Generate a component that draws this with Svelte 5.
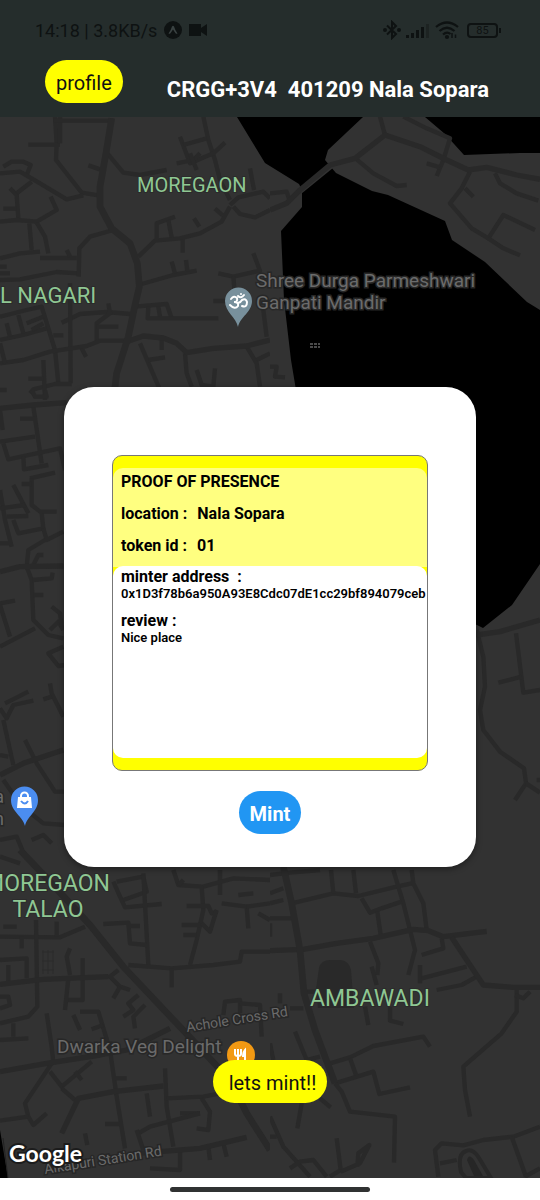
<script>
  const tiles = [
    {
      x: 0, y: 110, w: 270, h: 290,
      thick: [
        'M335 25 L318 130 L300 230 L300 290 L335 355 L390 400 L412 460 L418 530 L404 590 L385 680 L350 790 L340 870'
      ],
      roads: [
        'M165 20 L170 100 L168 150 L245 248 L295 256', 'M85 104 H180', 'M180 20 V100', 'M160 32 H340',
        'M322 130 L370 188 L420 195 L500 180', 'M265 166 L300 178', 'M10 170 L35 155 H70 L92 165 L80 195',
        'M0 190 L60 185 L120 220 L200 268 L250 256', 'M30 235 L50 255 L55 325', 'M50 250 L95 215', 'M10 296 H50',
        'M0 335 L50 330 L110 335 L170 300 L152 260', 'M88 340 L95 420', 'M110 338 L135 380 L145 430',
        'M0 445 L60 430 L120 425', 'M120 444 H230', 'M200 420 L210 440', 'M0 470 H20', 'M0 490 H30', 'M0 510 L60 508 L170 486 L235 490',
        'M340 360 L270 380 L238 415 L236 500', 'M415 440 L465 392 L540 385 L600 370 L665 335 L690 290',
        'M470 390 V340 L525 320', 'M505 330 L515 382', 'M548 388 V428', 'M582 325 L598 350', 'M645 296 L668 316',
        'M610 20 L625 90 L645 150 L660 210 L690 270', 'M540 80 L570 160 L640 130 L675 98', 'M550 105 L620 85', 'M530 160 L580 150 L600 130', 'M570 130 L590 180',
        'M750 175 L762 240', 'M690 285 L715 262 L790 245 L810 265', 'M700 290 L720 312 L765 322 L810 300',
        'M425 522 L520 495 L590 482', 'M515 455 L525 490', 'M558 450 L562 484', 'M655 490 L700 500 L780 482 L760 430',
        'M640 573 H680', 'M700 500 L705 560', 'M404 590 L500 582 L515 625', 'M445 590 L443 625 H655', 'M475 590 L480 620', 'M390 612 L320 606 L240 612 L185 638',
        'M0 620 L80 600 L125 590 L165 720 L175 820', 'M0 690 L70 675 L140 655', 'M20 640 L30 680', 'M55 615 L70 670', 'M80 640 L130 620', 'M95 660 L130 640',
        'M210 520 L212 820', 'M325 580 L330 610 L290 640 L290 695', 'M290 650 H355', 'M0 760 L70 750 L150 725 L260 708 L300 692 L380 692',
        'M0 700 L15 760', 'M160 676 H190', 'M245 715 L258 740', 'M90 850 L100 838 L165 822 L215 822', 'M130 750 L135 870', 'M85 806 H130',
        'M420 700 L450 770 L480 840', 'M445 750 L495 742', 'M485 690 V720', 'M555 730 L560 790 L575 830', 'M590 780 L605 825 L640 830 L645 775', 'M740 710 L770 760 L780 830', 'M790 600 L800 680', 'M770 750 L810 730', 'M0 840 H20'
      ],
      medium: ['M380 695 L430 678 L490 684 L530 700 L560 728 L640 715 L740 708 L810 690']
    },
    {
      x: 270, y: 110, w: 270, h: 290,
      thick: [],
      medium: ['M0 300 L50 280 L90 240 L180 165 L255 145 L345 75 L450 110 L530 150 L595 180 L650 172 L740 195 L810 208'],
      roads: [
        'M330 20 L345 75', 'M260 148 L310 190 L380 228 L410 225', 'M400 20 L470 55 L540 85 L520 150 L500 198', 'M470 160 L510 172',
        'M600 185 L575 235 L540 280 L605 355 L655 385 L700 315 L795 360', 'M655 385 L700 415 L750 436', 'M585 235 L610 260', 'M675 190 L690 220 L740 250 L805 272',
        'M0 250 L50 245 L60 275', 'M0 770 H20 L15 800 L45 802'
      ]
    },
    {
      x: 0, y: 390, w: 120, h: 480,
      thick: [],
      medium: ['M0 55 L100 45 L200 38', 'M0 545 L60 530 L190 528', 'M0 1155 L70 1120 L190 1080'],
      roads: [
        'M95 0 L105 20 H140 L135 0', 'M0 60 L8 120', 'M100 50 L125 220', 'M60 86 H105', 'M0 155 L105 140', 'M10 160 L25 208 L180 175 L195 240', 'M70 200 L72 238 L145 225',
        'M90 265 L165 248', 'M95 265 V345 L120 365 L170 365', 'M65 282 H95', 'M40 285 L85 370', 'M0 300 L15 390 L35 470', 'M0 355 L75 345', 'M20 380 L85 378',
        'M40 390 L55 430 L130 415 L125 370', 'M130 415 L140 450 L190 425', 'M0 460 H30', 'M135 450 L85 480 L80 530 L95 570 L100 690 L145 735 L190 745',
        'M100 525 L115 495 L130 495', 'M98 570 L155 565 L158 548', 'M100 615 H130', 'M0 640 L45 632', 'M0 645 L30 740', 'M0 770 L105 715', 'M150 720 L175 695 L190 720', 'M155 650 L180 670 L185 710',
        'M190 770 L145 790 L175 828 L195 825', 'M150 880 L155 910 L190 980', 'M130 928 L155 920', 'M15 940 L85 905', 'M0 955 L20 985 L40 945 L100 932', 'M10 990 L40 1125', 'M75 1050 L110 1120 L165 1205 L195 1205', 'M0 1095 L25 1100',
        'M10 1170 L45 1220', 'M80 1260 L130 1300 L195 1305', 'M0 1350 L50 1340 L75 1400', 'M95 1350 L130 1335 L155 1360', 'M0 1400 L60 1420'
      ]
    },
    {
      x: 0, y: 850, w: 270, h: 350,
      thick: ['M60 0 L150 95 L270 225 L370 350 L530 520 L690 690 L740 790 L810 900'],
      medium: ['M0 403 L130 388 L325 380', 'M0 665 L140 640 L300 615 L380 600 L510 535', 'M185 850 L235 745 L340 725 L490 708', 'M415 910 L600 895 L740 862'],
      roads: [
        'M0 260 L180 262 L255 230', 'M108 210 L112 470 L85 500 L0 520', 'M65 260 V295', 'M170 215 V260', 'M10 230 H50', 'M0 330 L80 325 V385', 'M25 345 V395', 'M0 440 H25 L30 465 L0 475', 'M40 520 V560', 'M0 570 L85 565',
        'M210 295 L200 320 L210 375', 'M248 325 V450 L200 450', 'M205 385 L195 480', 'M355 360 L330 380 L360 410 L390 420', 'M340 445 L360 410', 'M415 435 L385 460 L400 480 L370 500', 'M435 465 L400 500 L405 535',
        'M240 485 H295 L330 600 L350 740 L375 895', 'M220 495 L240 540', 'M275 538 L310 525', 'M140 490 L155 590 L160 640', 'M155 640 L75 760 L85 800 L100 825 L140 790', 'M0 812 L85 800', 'M150 665 L185 710 L275 635', 'M185 715 L225 750', 'M225 665 L245 690',
        'M340 95 L360 140 L375 172 L485 162', 'M350 95 L430 80 L440 125 L370 150', 'M430 70 L445 345', 'M310 222 L385 218 L390 280 L440 285', 'M390 228 H420', 'M385 345 L515 355 L640 345 L720 335 L725 305 L810 305', 'M515 355 V412',
        'M520 60 L535 105 L605 110 L610 180 L590 270 L570 345', 'M535 105 L550 90', 'M660 60 V135', 'M560 168 H625 L635 190 L650 185', 'M605 220 L630 245 L650 180', 'M545 225 H600', 'M550 255 H590', 'M610 110 L700 85 L810 90', 'M715 135 L760 130', 'M665 160 L740 170 L745 235', 'M740 170 L810 160', 'M775 190 L810 210',
        'M670 495 L675 455 L720 450 L720 490', 'M720 460 L780 465 L785 560', 'M345 685 H380', 'M495 655 L500 770 L520 890', 'M500 745 L610 740 L660 730', 'M605 745 L630 785 L625 840 L590 835', 'M540 790 H600', 'M440 730 L450 800', 'M415 850 L450 830 L600 790', 'M315 822 H360', 'M255 850 L262 885', 'M540 900 V960 L450 955', 'M625 890 L630 930', 'M670 880 L680 920', 'M410 840 L430 900'
      ]
    },
    {
      x: 270, y: 850, w: 270, h: 350,
      thick: ['M40 50 L65 160 L90 300 L102 430 L135 540 L195 700'],
      medium: ['M0 302 L100 298 L200 280 L310 265 L430 238 L475 242 L520 260 L650 244', 'M545 262 L590 330 L640 405 L730 412 L810 412'],
      roads: [
        'M0 75 L60 68 L150 60', 'M0 130 L40 115', 'M65 160 L190 130 L265 138 L380 110 L425 100', 'M183 60 L190 130', 'M250 60 L258 130', 'M370 60 L400 160 L435 300 L415 375', 'M425 60 L430 100 L460 160 L470 240',
        'M275 145 L300 188 L335 175 L395 155', 'M322 185 L332 255', 'M0 160 L40 150', 'M0 205 H70', 'M0 220 V260', 'M300 275 L325 340 L322 375', 'M305 350 L320 405', 'M455 315 L520 295 L515 265', 'M450 345 V400', 'M455 385 L590 350', 'M500 420 L575 405 L620 380',
        'M100 425 H140', 'M60 475 H100', 'M30 430 V460', 'M285 470 L295 525', 'M360 470 V512 L400 522', 'M75 545 L110 630 L150 620', 'M0 580 L10 630', 'M180 640 L240 622 L310 588 L460 560 L480 590', 'M195 700 L310 665 L328 732 L420 712', 'M240 625 L258 675',
        'M195 700 L215 725 L240 785 L375 800 L372 938', 'M740 420 L740 485 L695 550 L580 650 L585 720 L600 800', 'M780 425 L760 445 L735 435',
        'M505 980 L495 900 L515 880 L580 886 L640 870 L730 860 L810 830', 'M510 940 L560 930', 'M725 860 L768 980', 'M765 980 L810 955', 'M95 760 L82 835', 'M150 745 L182 772', 'M0 800 L40 890 L120 980', 'M0 860 H20', 'M60 955 L90 935 L130 930 L170 980', 'M200 865 L212 960 L180 980', 'M212 965 L270 940 L298 885 L265 910 L262 950'
      ]
    },
    {
      x: 440, y: 390, w: 100, h: 480,
      thick: [],
      medium: ['M110 735 L180 725 L300 690'],
      roads: ['M110 720 L130 800 L135 890 L120 960 L130 1020 L180 1085 L252 1135 L258 1180 L225 1230', 'M258 1180 L300 1208', 'M228 730 L250 908 L300 900', 'M175 878 L245 860', 'M290 1170 H300']
    }
  ];

  const details = [
    { label: 'location :', value: 'Nala Sopara' },
    { label: 'token id :', value: '01' }
  ];
  const notes = [
    { label: 'minter address\u00a0 :', value: '0x1D3f78b6a950A93E8Cdc07dE1cc29bf894079ceb' },
    { label: 'review :', value: 'Nice place' }
  ];
</script>

<div class="screen">
  <header>
    <div class="status">
      <div class="cluster">
        <span class="clock">14:18 | 3.8KB/s</span>
        <svg class="app" width="18" height="18" viewBox="0 0 18 18" aria-hidden="true">
          <circle cx="9" cy="9" r="9" fill="#0e1212" />
          <path d="M4.5 12.5 Q7 9 8 5.4 Q9 4 10 5.4 Q11 9 13.5 12.5 Q12 13.5 11.2 11.7 L9 8.4 L6.8 11.7 Q6 13.5 4.5 12.5Z" fill="#3a4242" />
        </svg>
        <svg class="camera" width="20" height="14" viewBox="0 0 20 14" aria-hidden="true">
          <path d="M1 1 H13 V5 L19 1 V13 L13 9 V13 H1Z" fill="#0e1212" />
        </svg>
      </div>
      <div class="cluster">
        <svg width="18" height="20" viewBox="0 0 18 20" fill="none" stroke="#0e1212" stroke-width="2" aria-hidden="true">
          <path d="M4 5.5 L13 14 L9 18 V2 L13 6 L4 14.5" />
          <circle cx="2" cy="10" r="1" /><circle cx="16" cy="10" r="1" />
        </svg>
        <svg width="26" height="18" viewBox="0 0 26 18" fill="#0e1212" aria-hidden="true">
          <path d="M1 14h3v3H1z M6 12h3v5H6z M11 9h3v8h-3z M16 6h3v11h-3z" />
          <path d="M21 3h3v14h-3z" opacity=".35" />
        </svg>
        <svg width="24" height="20" viewBox="0 0 24 20" fill="none" stroke="#0e1212" stroke-width="2.2" aria-hidden="true">
          <path d="M1 7 Q12 -2 23 7" /><path d="M4.5 11 Q12 4.5 19.5 11" /><path d="M8 14.5 Q12 11 15.5 14" />
          <circle cx="12" cy="17" r="1" /><path d="M17 13v5M20.500 14.500v3.500" stroke-width="1.500" />
        </svg>
        <span class="battery">85</span>
      </div>
    </div>
    <div class="bar">
      <button class="pill profile">profile</button>
      <h1>CRGG+3V4&nbsp; 401209 Nala Sopara</h1>
    </div>
  </header>

  <main>
    <svg class="map" viewBox="0 117 540 1061" preserveAspectRatio="xMidYMin slice" role="img" aria-label="Map">
      <rect y="117" width="540" height="1061" fill="#323232" />
      <path fill="#000" d="M237 117 L265 163 L299 184 L302 190 L302 207 L281 231 L284 300 L291 360 L296 390 L400 600 L477 625 L483 628 L512 605 L540 564 V310 L527 302 L485 262 L452 240 L445 221 L388 195 L372 191 L336 173 L325 160 L328 150 L363 117Z" />
      <path fill="#000" d="M425 117 L445 134 L464 155 L520 153 L540 153 V117Z" />
      <path d="M300 191 L332 165" stroke="#323232" stroke-width="6" />
      {#each tiles as t}
        <svg x={t.x} y={t.y} width={t.w} height={t.h} viewBox="0 0 {t.w * 3} {t.h * 3}" class="roads">
          {#each t.roads as d}<path {d} stroke-width="13" />{/each}
          {#each t.medium as d}<path {d} stroke-width="16" />{/each}
          {#each t.thick as d}<path {d} stroke-width="20" />{/each}
        </svg>
      {/each}
      <path d="M316 989 L319 968 Q321 960 330 960 H341 Q349 961 351 970 L354 1008 H318Z" fill="#292929" />
      <path d="M461 1172 Q457 1154 466 1151 Q473 1148 479 1158 L491 1178 H466Z" fill="none" stroke="#282828" stroke-width="4" />
      <path d="M467 1160 Q469 1153 474 1160 L483 1176 H474Z" fill="#262626" />
      <path d="M42 952h12M42 961h12M42 970h12M43 950v24M48 950v24M53 950v24" stroke="#2b2b2b" />
      <path d="M0 1130 L8 1178 H0Z" fill="#000" /><path d="M3 1138 L8 1178" stroke="#222" />

      <g class="area">
        <text x="137" y="192" font-size="20">MOREGAON</text>
        <text x="0" y="303" font-size="22">L NAGARI</text>
        <text x="110" y="891" font-size="23" text-anchor="end">MOREGAON</text>
        <text x="48" y="917" font-size="23" text-anchor="middle">TALAO</text>
        <text x="370" y="1006" font-size="23" text-anchor="middle">AMBAWADI</text>
      </g>
      <g class="place">
        <text x="256" y="287" font-size="19">Shree Durga Parmeshwari</text>
        <text x="256" y="309" font-size="19">Ganpati Mandir</text>
        <text x="57" y="1053" font-size="19">Dwarka Veg Delight</text>
        <text x="4" y="803" font-size="18" text-anchor="end">a</text>
        <text x="4" y="825" font-size="18" text-anchor="end">n</text>
        <text font-size="14" transform="translate(187 1032) rotate(-9)">Achole Cross Rd</text>
        <text font-size="14" transform="translate(45 1174) rotate(-9)">Alkapuri Station Rd</text>
      </g>
      <path d="M310 344h10M310 347h10" stroke="#4a4a4a" stroke-width="2" stroke-dasharray="3 1" />

      <path d="M238 327 C236 317 225 312 225 301 A13 13 0 0 1 252 301 C252 312 240 317 238 327Z" fill="#78909c" />
      <g fill="none" stroke="#fff" stroke-width="2" stroke-linecap="round" transform="translate(0 1)">
        <path d="M231 298 Q234 294 237 297 Q238 301 234 301 Q239 301 238 305 Q235 309 230 304" />
        <path d="M238 302 Q241 301 242 299 Q246 297 247 301 Q247 307 242 305 M238 295 Q241 298 244 294" />
        <circle cx="241" cy="293" r="1" fill="#fff" stroke="none" />
      </g>
      <path d="M25 826 C23 816 11 812 11 800 A13.500 13.500 0 0 1 38 800 C38 812 27 816 25 826Z" fill="#4b8df0" />
      <path d="M18 797h13l1 11H17z" fill="#fff" />
      <path d="M21 798v-2a3 3 0 0 1 7 0v2" fill="none" stroke="#fff" stroke-width="2" />
      <path d="M21 801 Q25 806 28 801" fill="none" stroke="#4b8df0" stroke-width="2" />
      <circle cx="241" cy="1055" r="14" fill="#f29913" />
      <g fill="none" stroke="#fff" stroke-width="2">
        <path d="M235 1049v5q0 2 3 2t3-2v-5M238 1049v16" /><path d="M245 1065v-15q-2 2-2 6h2" fill="#fff" />
      </g>
      <text class="brand" x="9" y="1162">Google</text>
    </svg>

    <section class="modal" aria-label="Mint preview">
      <div class="token">
        <div class="details">
          <h2>PROOF OF PRESENCE</h2>
          {#each details as d}
            <p><span>{d.label}</span><span>{d.value}</span></p>
          {/each}
        </div>
        <div class="notes">
          {#each notes as n}
            <p>{n.label}<small>{n.value}</small></p>
          {/each}
        </div>
      </div>
      <button class="pill mint">Mint</button>
    </section>
    <button class="pill launch">lets mint!!</button>
  </main>
  <footer><span></span></footer>
</div>

<style>
  :global(body) { margin: 0; background: #fff; }
  .screen {
    display: flex;
    flex-direction: column;
    min-height: 100vh;
    font-family: Roboto, "Liberation Sans", sans-serif;
    color: #000;
  }
  header { background: #252d2c; padding-bottom: 14px; }
  .status {
    display: flex;
    justify-content: space-between;
    align-items: center;
    height: 60px;
    padding: 0 42px 0 35px;
    color: #0e1212;
  }
  .cluster { display: flex; align-items: center; gap: 4px; }
  .clock { font-size: 18px; }
  .app { margin-left: 3px; }
  .camera { margin-left: 2px; }
  .battery {
    position: relative;
    box-sizing: border-box;
    width: 31px;
    height: 15px;
    margin-left: 4px;
    border: 2px solid #0e1212;
    border-radius: 4px;
    font-size: 11px;
    line-height: 11px;
    text-align: center;
  }
  .battery::after {
    content: "";
    position: absolute;
    right: -5px;
    top: 3px;
    width: 2px;
    height: 5px;
    background: #0e1212;
  }
  .bar { display: flex; align-items: center; gap: 44px; padding: 0 45px; }
  h1 { margin: 16px 0 0; font-size: 22px; line-height: 26px; font-weight: 700; color: #fff; white-space: nowrap; }
  .pill {
    border: 0;
    border-radius: 22px;
    height: 43px;
    background: #ff0;
    color: #111;
    font-family: inherit;
    font-size: 20px;
    flex: none;
  }
  .profile { padding: 3px 11px 0; }
  main {
    position: relative;
    flex: 1;
    display: flex;
    flex-direction: column;
    align-items: center;
    padding: 270px 64px 75px;
    overflow: hidden;
  }
  .map { position: absolute; inset: 0; width: 100%; height: 100%; }
  .roads { fill: none; stroke: #292929; stroke-linejoin: round; }
  .area { fill: #8fc793; stroke: #2b2b2b; stroke-width: 2px; paint-order: stroke; }
  .place { fill: #6b6b6b; stroke: #272727; stroke-width: 3px; paint-order: stroke; }
  .brand {
    font: 700 23px Lato, sans-serif;
    fill: #fff;
    stroke: #1c1c1c;
    stroke-width: 4px;
    paint-order: stroke;
  }
  .modal {
    position: relative;
    box-sizing: border-box;
    width: 100%;
    display: flex;
    flex-direction: column;
    align-items: center;
    gap: 20px;
    padding: 68px 48px 33px;
    background: #fff;
    border-radius: 30px;
    box-shadow: 0 2px 6px rgba(0, 0, 0, 0.4);
  }
  .token {
    box-sizing: border-box;
    width: 100%;
    border: 1px solid #777;
    border-radius: 10px;
    padding: 12px 0;
    background: #ff0;
    font-weight: 700;
    overflow: hidden;
  }
  .details {
    display: grid;
    gap: 13px;
    padding: 4px 8px 12px;
    background: #ffff80;
    border-radius: 10px 10px 0 0;
  }
  .notes {
    display: grid;
    align-content: start;
    gap: 10px;
    box-sizing: border-box;
    min-height: 192px;
    margin-top: -1px;
    padding: 1px 8px;
    background: #fff;
    border-radius: 10px;
  }
  .token p, h2 { margin: 0; font-size: 16px; line-height: 19px; font-weight: 700; }
  .details p { display: flex; gap: 10px; }
  small { display: block; font-size: 13px; line-height: 15px; font-weight: 600; white-space: nowrap; }
  .mint { padding: 3px 11px 0; background: #2196f3; color: #fff; font-weight: 700; }
  .launch { position: relative; margin-top: auto; padding: 3px 11px 0 16px; }
  footer { display: grid; place-items: center; height: 22px; background: #fff; }
  footer span { width: 37%; height: 5px; border-radius: 3px; background: #303232; }
</style>
